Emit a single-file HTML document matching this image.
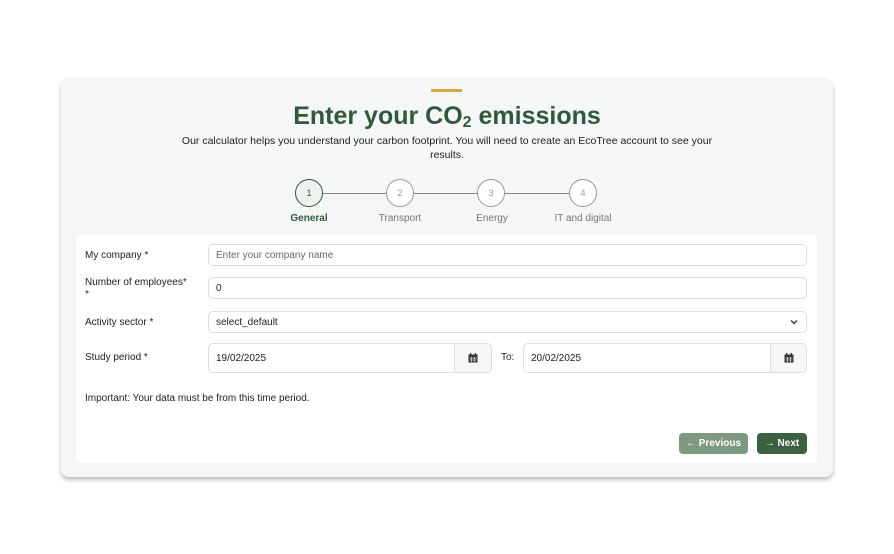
<!DOCTYPE html><html><head><style>
body{margin:0;width:894px;height:554px;background:#fff;font-family:"Liberation Sans",sans-serif;position:relative;overflow:hidden}
.a{position:absolute}
.card{left:61px;top:78px;width:772px;height:399px;background:#f4f6f7;border-radius:8px;box-shadow:0 3px 4px rgba(0,0,0,.25)}
.panel{left:76px;top:235px;width:741px;height:228px;background:#fff;border-radius:4px}
.lbl{font-size:10px;color:#222}
.in{background:#fff;border:1px solid #dcdfe2;border-radius:5px;box-sizing:border-box;font-size:10px;color:#222;padding-left:7px;display:flex;align-items:center}
.c{width:28px;height:28px;border-radius:50%;border:1px solid #999;box-sizing:border-box;background:#fff;font-size:9px;color:#999;display:flex;align-items:center;justify-content:center}
.sl{font-size:10px;color:#777;width:100px;text-align:center}
.btn{border-radius:4px;color:#fff;font-size:10px;font-weight:bold;display:flex;align-items:center;justify-content:center}
.cal{background:#f4f6f7;border:1px solid #dcdfe2;box-sizing:border-box;display:flex;align-items:center;justify-content:center}
</style></head><body>
<div class="a card"></div>
<div class="a" style="left:431px;top:89px;width:31px;height:3px;background:#d9a53f"></div>
<div class="a" style="left:0;width:894px;top:102px;text-align:center;font-size:25px;font-weight:bold;color:#30583a">Enter your CO<sub style="font-size:16px;vertical-align:-3px">2</sub> emissions</div>
<div class="a" style="left:0;width:894px;top:134px;text-align:center;font-size:10.5px;line-height:14px;color:#222">Our calculator helps you understand your carbon footprint. You will need to create an EcoTree account to see your<br>results.</div>
<div class="a" style="left:309px;top:193px;width:274px;height:1px;background:#888"></div>
<div class="a c" style="left:295px;top:179px;border-color:#30583a;background:#eef2ee;color:#30583a;border-width:1.5px">1</div>
<div class="a c" style="left:386px;top:179px">2</div>
<div class="a c" style="left:477px;top:179px">3</div>
<div class="a c" style="left:569px;top:179px">4</div>
<div class="a sl" style="left:259px;top:213px;color:#30583a;font-weight:bold">General</div>
<div class="a sl" style="left:350px;top:213px">Transport</div>
<div class="a sl" style="left:442px;top:213px">Energy</div>
<div class="a sl" style="left:533px;top:213px">IT and digital</div>
<div class="a panel"></div>
<div class="a lbl" style="left:85px;top:250px">My company *</div>
<div class="a in" style="left:208px;top:244px;width:599px;height:22px;color:#666">Enter your company name</div>
<div class="a lbl" style="left:85px;top:277px;line-height:12px">Number of employees*<br>*</div>
<div class="a in" style="left:208px;top:277px;width:599px;height:22px">0</div>
<div class="a lbl" style="left:85px;top:317px">Activity sector *</div>
<div class="a in" style="left:208px;top:311px;width:599px;height:22px">select_default<svg class="a" style="right:8px;top:7px" width="8" height="6" viewBox="0 0 8 6"><path d="M1 1.5L4 4.5L7 1.5" stroke="#333" stroke-width="1.3" fill="none"/></svg></div>
<div class="a lbl" style="left:85px;top:352px">Study period *</div>
<div class="a in" style="left:208px;top:343px;width:247px;height:30px;border-radius:5px 0 0 5px">19/02/2025</div>
<div class="a cal" style="left:454px;top:343px;width:38px;height:30px;border-radius:0 5px 5px 0"><svg width="10" height="10" viewBox="0 0 10 10"><rect x="0.5" y="1.5" width="9" height="8" fill="#333"/><rect x="2" y="0" width="1.3" height="2" fill="#333"/><rect x="6.7" y="0" width="1.3" height="2" fill="#333"/><path d="M1.5 5h7M1.5 7h7M3.5 4v5M6.5 4v5" stroke="#fff" stroke-width=".6"/></svg></div>
<div class="a lbl" style="left:501px;top:352px">To:</div>
<div class="a in" style="left:523px;top:343px;width:248px;height:30px;border-radius:5px 0 0 5px">20/02/2025</div>
<div class="a cal" style="left:770px;top:343px;width:37px;height:30px;border-radius:0 5px 5px 0"><svg width="10" height="10" viewBox="0 0 10 10"><rect x="0.5" y="1.5" width="9" height="8" fill="#333"/><rect x="2" y="0" width="1.3" height="2" fill="#333"/><rect x="6.7" y="0" width="1.3" height="2" fill="#333"/><path d="M1.5 5h7M1.5 7h7M3.5 4v5M6.5 4v5" stroke="#fff" stroke-width=".6"/></svg></div>
<div class="a lbl" style="left:85px;top:393px">Important: Your data must be from this time period.</div>
<div class="a btn" style="left:679px;top:433px;width:69px;height:21px;background:#7d9a80">← Previous</div>
<div class="a btn" style="left:757px;top:433px;width:50px;height:21px;background:#3b6140">→ Next</div>
</body></html>
